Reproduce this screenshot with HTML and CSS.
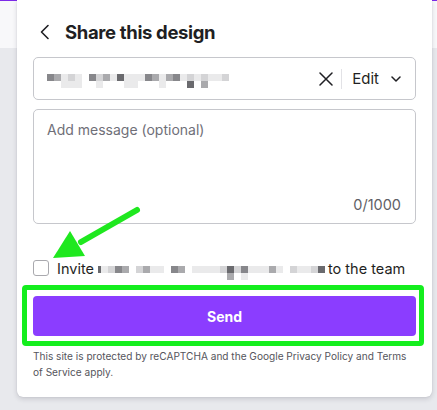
FILE: index.html
```html
<!DOCTYPE html>
<html lang="en">
<head>
    <title>Share this design</title>
    <meta name='viewport' content='width=device-width, initial-scale=1'>
    <link rel="stylesheet" href="styles.css">
</head>
<body>
<div class="panel">
    <div class="header">
        <button class="back" type="button" aria-label="Back">
            <svg width="12" height="16" viewBox="0 0 12 16"><path d="M9 1.5 2.5 8 9 14.5" fill="none" stroke="#1f1f23" stroke-width="1.6" stroke-linecap="round" stroke-linejoin="round"/></svg>
        </button>
        <h1>Share this design</h1>
    </div>

    <div class="people-field">
        <div class="mosaic mosaic-email">
            <div class="mrow">
                <i class="c4"></i><i class="c3"></i><i class="c1"></i><i class="c2"></i><i class="c1"></i><i class="c0"></i>
                <i class="c4"></i><i class="c2"></i><i class="c3"></i><i class="c1"></i><i class="c5"></i><i class="c1"></i>
                <i class="c1"></i><i class="c1"></i><i class="c4"></i><i class="c3"></i><i class="c1"></i><i class="c3"></i>
                <i class="c4"></i><i class="c1"></i><i class="c2"></i><i class="c1"></i><i class="c2"></i><i class="c1"></i><i class="c1"></i><i class="c2"></i>
            </div>
            <div class="mrow">
                <i class="c0"></i><i class="c0"></i><i class="c1"></i><i class="c1"></i><i class="c1"></i><i class="c0"></i>
                <i class="c0"></i><i class="c1"></i><i class="c0"></i><i class="c0"></i><i class="c0"></i><i class="c1"></i>
                <i class="c1"></i><i class="c0"></i><i class="c0"></i><i class="c0"></i><i class="c1"></i><i class="c0"></i>
                <i class="c0"></i><i class="c0"></i><i class="c5"></i><i class="c0"></i><i class="c3"></i><i class="c0"></i><i class="c0"></i><i class="c0"></i>
            </div>
        </div>
        <div class="field-actions">
            <button class="clear" type="button" aria-label="Clear">
                <svg width="14" height="14" viewBox="0 0 14 14"><path d="M1 1l12 12M13 1 1 13" stroke="#1f1f23" stroke-width="1.5" stroke-linecap="round"/></svg>
            </button>
            <span class="divider"></span>
            <button class="role" type="button">Edit
                <svg width="10" height="6" viewBox="0 0 10 6"><path d="M1 1l4 4 4-4" fill="none" stroke="#1f1f23" stroke-width="1.5" stroke-linecap="round" stroke-linejoin="round"/></svg>
            </button>
        </div>
    </div>

    <div class="message">
        <span class="placeholder">Add message (optional)</span>
        <span class="counter">0/1000</span>
    </div>

    <label class="invite">
        <span class="checkbox"></span>
        <span>Invite</span>
        <span class="mosaic mosaic-name">
            <span class="mrow">
                <i class="c5 thin"></i><i class="c1"></i><i class="c2"></i><i class="c4"></i><i class="c3"></i><i class="c0"></i><i class="c2"></i><i class="c3"></i>
                <i class="c1"></i><i class="c1"></i><i class="c0"></i><i class="c4"></i><i class="c3"></i><i class="c0"></i><i class="c1"></i><i class="c1"></i>
                <i class="c1"></i><i class="c1"></i><i class="c2"></i><i class="c5"></i><i class="c2"></i><i class="c4"></i><i class="c1"></i><i class="c1"></i>
                <i class="c1"></i><i class="c3"></i><i class="c1"></i><i class="c0"></i><i class="c2"></i><i class="c1"></i><i class="c1"></i><i class="c2"></i><i class="c5"></i>
            </span>
            <span class="mrow">
                <i class="c0 thin"></i><i class="c0"></i><i class="c0"></i><i class="c0"></i><i class="c0"></i><i class="c0"></i><i class="c0"></i><i class="c0"></i>
                <i class="c0"></i><i class="c0"></i><i class="c0"></i><i class="c0"></i><i class="c0"></i><i class="c0"></i><i class="c0"></i><i class="c0"></i>
                <i class="c0"></i><i class="c0"></i><i class="c0"></i><i class="c3"></i><i class="c0"></i><i class="c1"></i><i class="c0"></i><i class="c0"></i>
                <i class="c0"></i><i class="c0"></i><i class="c0"></i><i class="c0"></i><i class="c0"></i><i class="c0"></i><i class="c0"></i><i class="c0"></i><i class="c0"></i>
            </span>
        </span>
        <span>to the team</span>
    </label>

    <div class="send-wrap">
        <button class="send" type="submit">Send</button>
        <span class="highlight"></span>
    </div>

    <p class="legal">This site is protected by reCAPTCHA and the Google Privacy Policy and Terms of Service apply.</p>

    <svg class="arrow" width="100" height="66" viewBox="0 0 100 66">
        <path d="M92 10 36 42" stroke="#1fe81f" stroke-width="6" stroke-linecap="round"/>
        <polygon points="8,58 25,31 40,56" fill="#1fe81f"/>
    </svg>
</div>
</body>
</html>
```

FILE: styles.css
```css
:root {
    --ink: #1f1f23;
    --muted: #6f6f78;
    --line: #c6c7cc;
    --purple: #8b3dff;
    --marker: #14ee1e;
}

html {
    box-sizing: border-box;
}

*, *:before, *:after {
    box-sizing: inherit;
}

body {
    margin: 0;
    font-family: Inter, "Open Sans", sans-serif;
    color: var(--ink);
    background: linear-gradient(#7d2ae8 0 1px, #f8f8fa 1px 48px, #e8e9ed 48px);
    min-height: 100vh;
}

.panel {
    position: relative;
    width: 415px;
    margin-left: 17px;
    padding: 12px 16px 17px;
    background: #fff;
    border-radius: 0 0 6px 6px;
    box-shadow: 0 2px 5px rgba(30, 30, 50, 0.16), 0 0 1px rgba(30, 30, 50, 0.2);
}

.header {
    display: flex;
    align-items: center;
    height: 40px;
}

.back {
    display: flex;
    border: none;
    background: none;
    padding: 0;
    margin: 0 14px 0 6px;
}

h1 {
    margin: 0;
    font-size: 18.5px;
    font-weight: 700;
    letter-spacing: -0.35px;
}

.people-field {
    display: flex;
    align-items: flex-start;
    height: 43px;
    margin-top: 5px;
    padding: 0 14px 0 13px;
    border: 1px solid var(--line);
    border-radius: 5px;
}

.mosaic {
    display: flex;
    flex-direction: column;
}

.mrow {
    display: flex;
}

.mrow i {
    display: block;
    width: 7px;
    height: 7px;
}

.mrow i.thin {
    width: 3px;
}

.c0 { background: transparent; }
.c1 { background: #eaeaeb; }
.c2 { background: #d4d4d6; }
.c3 { background: #aaaaad; }
.c4 { background: #87878b; }
.c5 { background: #6a6a6e; }

.mosaic-email {
    margin-top: 16px;
}

.field-actions {
    display: flex;
    align-items: center;
    height: 41px;
    margin-left: auto;
}

.clear {
    display: flex;
    border: none;
    background: none;
    padding: 0;
}

.divider {
    width: 1px;
    height: 20px;
    margin: 0 10px 0 8px;
    background: #e2e2e6;
}

.role {
    display: flex;
    align-items: center;
    gap: 12px;
    border: none;
    background: none;
    padding: 0;
    font: inherit;
    font-size: 15px;
    color: var(--ink);
}

.message {
    display: flex;
    flex-direction: column;
    justify-content: space-between;
    height: 115px;
    margin-top: 9px;
    padding: 11px 14px 9px 13px;
    border: 1px solid var(--line);
    border-radius: 5px;
    font-size: 14px;
    line-height: 18px;
}

.placeholder {
    color: var(--muted);
}

.counter {
    align-self: flex-end;
    font-size: 14.5px;
    color: #5f5f66;
}

.invite {
    display: flex;
    align-items: center;
    height: 18px;
    margin-top: 35px;
    font-size: 14.5px;
}

.checkbox {
    width: 16px;
    height: 16px;
    margin-right: 8px;
    border: 1.5px solid #a9a9ae;
    border-radius: 3px;
}

.mosaic-name {
    margin: 10px 3px 0 4px;
}

.send-wrap {
    position: relative;
    margin-top: 19px;
}

.send {
    display: block;
    width: 100%;
    height: 40px;
    border: none;
    border-radius: 4px;
    background: var(--purple);
    color: #fff;
    font: inherit;
    font-size: 14px;
    font-weight: 700;
}

.highlight {
    position: absolute;
    left: -11px;
    top: -11px;
    right: -8px;
    bottom: -10px;
    border: 5px solid var(--marker);
    border-radius: 4px;
}

.legal {
    margin: 12px 0 0;
    font-size: 10.1px;
    line-height: 16px;
    color: #55555c;
}

.arrow {
    position: absolute;
    left: 28px;
    top: 200px;
}
```
